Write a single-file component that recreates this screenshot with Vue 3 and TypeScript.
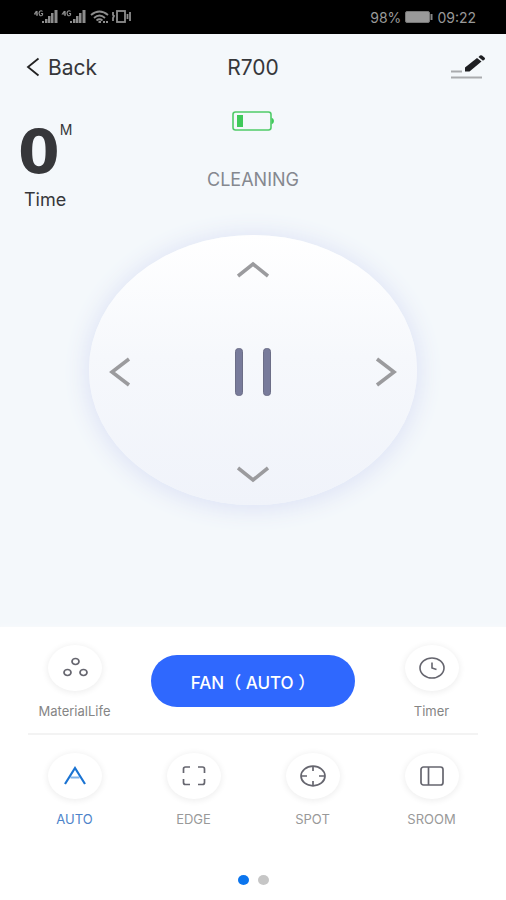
<script setup lang="ts">
import { ref } from 'vue'

type ModeId = 'auto' | 'edge' | 'spot' | 'sroom'
type Direction = 'up' | 'left' | 'right' | 'down'

interface Mode {
  id: ModeId
  label: string
}

const modes: Mode[] = [
  { id: 'auto', label: 'AUTO' },
  { id: 'edge', label: 'EDGE' },
  { id: 'spot', label: 'SPOT' },
  { id: 'sroom', label: 'SROOM' },
]

const arrows: { id: Direction; points: string; box: string }[] = [
  { id: 'up', points: '1,15 16,3 31,15', box: '0 0 32 18' },
  { id: 'left', points: '20,2 3,15 20,28', box: '0 0 22 30' },
  { id: 'right', points: '2,2 19,15 2,28', box: '0 0 22 30' },
  { id: 'down', points: '1,3 16,15 31,3', box: '0 0 32 18' },
]

const activeMode = ref<ModeId>('auto')
const page = ref(0)
</script>

<template>
  <div class="screen">
    <div class="status">
      <svg class="status-icons" viewBox="0 0 98 14" aria-hidden="true">
        <g fill="#8d8d8d">
          <g v-for="x in [0, 28]" :key="x" :transform="`translate(${x} 0)`">
            <path d="M2.500 1L0.500 4H4M3 1V6" fill="none" stroke="#8d8d8d" stroke-width="1.200" />
            <path d="M8.500 1.500A2 2.500 0 1 0 8.500 5V3.500H7" fill="none" stroke="#8d8d8d" stroke-width="1.200" />
            <rect x="8" y="11" width="2" height="2" />
            <rect x="11" y="9" width="2.500" height="4" />
            <rect x="14" y="6" width="2.500" height="7" />
            <rect x="17" y="3" width="2.500" height="10" />
            <rect x="20.500" y="0" width="3" height="13" />
          </g>
        </g>
        <g fill="none" stroke="#8d8d8d" stroke-width="1.800">
          <path d="M57 5Q65.500-2 74 5M60 8Q65.500 3 71 8M62.500 10.500Q65.500 8 68.500 10.500" />
          <path d="M64.500 12H67M69 12h2M72 12h2" />
          <rect x="83" y="1" width="8" height="11" />
          <path d="M79 2v3l1 1l-1 2v3M93.500 4v5M96 2v9" />
        </g>
      </svg>
      <div class="status-right">
        <span>98%</span>
        <svg class="status-battery" viewBox="0 0 28 12" aria-hidden="true">
          <rect x="0.500" y="0.500" width="24" height="11" rx="1.500" fill="#999" stroke="#777" />
          <path d="M26.500 3v6" stroke="#888" stroke-width="2" />
        </svg>
        <span>09:22</span>
      </div>
    </div>

    <header class="header">
      <button class="back" type="button">
        <svg viewBox="0 0 14 20" aria-hidden="true">
          <path d="M12.500 1.500L2 10L12.500 18.500" fill="none" stroke="#222" stroke-width="1.800" />
        </svg>
        Back
      </button>
      <h1>R700</h1>
      <button class="edit" type="button" aria-label="Edit">
        <svg viewBox="0 0 36 26" aria-hidden="true">
          <path d="M1 17.500H12M1 23.500H32" stroke="#a9abae" stroke-width="2" />
          <path d="M15 17.500V13.500L27 4L31.500 7.500L19.500 17.500Z" fill="#1e1f22" />
          <path d="M28.500 3L30 1.500Q31 .800 32 1.500L34.700 3.700Q35.500 4.500 34.700 5.300L33 6.700Z" fill="#1e1f22" />
        </svg>
      </button>
    </header>

    <main class="stage">
      <section class="info">
        <div class="time">
          <p class="time-value"><strong>0</strong><span>M</span></p>
          <p class="time-label">Time</p>
        </div>
        <div class="state">
          <svg class="battery" viewBox="0 0 42 20" role="img" aria-label="Battery low">
            <rect x="1" y="1" width="38" height="18" rx="2.500" fill="none" stroke="#4fcb68" stroke-width="1.600" />
            <rect x="5" y="4" width="6" height="12" fill="#3fc95a" />
            <path d="M39.500 6.500Q42 7.500 42 10Q42 12.500 39.500 13.500Z" fill="#3fc95a" />
          </svg>
          <p class="state-label">CLEANING</p>
        </div>
      </section>

      <section class="dial" aria-label="Direction control">
        <button
          v-for="arrow in arrows"
          :key="arrow.id"
          :class="['arrow', arrow.id]"
          type="button"
          :aria-label="arrow.id"
        >
          <svg :viewBox="arrow.box" aria-hidden="true">
            <polyline :points="arrow.points" fill="none" stroke="#9b9b9e" stroke-width="3.600" />
          </svg>
        </button>
        <button class="pause" type="button" aria-label="Pause">
          <svg viewBox="0 0 38 50" aria-hidden="true">
            <g fill="#787b9b" stroke="#6c6e87">
              <rect x="1.500" y="1.500" width="7" height="47" rx="3" />
              <rect x="29.500" y="1.500" width="7" height="47" rx="3" />
            </g>
          </svg>
        </button>
      </section>
    </main>

    <footer class="panel">
      <div class="row">
        <button class="tool" type="button">
          <span class="disc">
            <svg viewBox="0 0 28 24" aria-hidden="true">
              <g fill="none" stroke="#66666f" stroke-width="1.700">
                <ellipse cx="14.500" cy="5.500" rx="3.500" ry="3" />
                <ellipse cx="6.500" cy="16.500" rx="3.500" ry="3" />
                <ellipse cx="22.500" cy="16.500" rx="3.500" ry="3" />
              </g>
            </svg>
          </span>
          <span class="caption">MaterialLife</span>
        </button>
        <button class="fan" type="button">FAN（ AUTO ）</button>
        <button class="tool" type="button">
          <span class="disc">
            <svg viewBox="0 0 28 24" aria-hidden="true">
              <g fill="none" stroke="#66666f" stroke-width="1.600">
                <ellipse cx="14" cy="12" rx="12" ry="10" />
                <path d="M14 6.500V12L18.500 13.500" />
              </g>
            </svg>
          </span>
          <span class="caption">Timer</span>
        </button>
      </div>

      <hr class="divider" />

      <div class="row modes">
        <button
          v-for="mode in modes"
          :key="mode.id"
          :class="['tool', { active: mode.id === activeMode }]"
          type="button"
          :aria-pressed="mode.id === activeMode"
          @click="activeMode = mode.id"
        >
          <span class="disc">
            <svg viewBox="0 0 28 24" aria-hidden="true">
              <g fill="none" stroke="#66666f" stroke-width="1.700">
                <g v-if="mode.id === 'auto'" stroke="#1a73d2">
                  <path d="M9.500 13.500H18.500" stroke="#7fb2e8" stroke-width="2" />
                  <path d="M4 20L14 4L24 20" stroke-width="2.200" />
                </g>
                <path
                  v-else-if="mode.id === 'edge'"
                  d="M3.500 9V5Q3.500 3 5.500 3H10M18 3H22.500Q24.500 3 24.500 5V9M24.500 15V18.500Q24.500 20.500 22.500 20.500H18M10 20.500H5.500Q3.500 20.500 3.500 18.500V15"
                />
                <g v-else-if="mode.id === 'spot'">
                  <ellipse cx="14" cy="12" rx="12" ry="9.800" />
                  <path d="M14 2V7M14 17V22M2 12H8M20 12H26" />
                </g>
                <g v-else>
                  <rect x="3" y="3" width="22" height="18" rx="2.500" />
                  <path d="M10.500 3V21" />
                </g>
              </g>
            </svg>
          </span>
          <span class="caption">{{ mode.label }}</span>
        </button>
      </div>

      <nav class="dots" aria-label="Pages">
        <button
          v-for="n in 2"
          :key="n"
          :class="{ current: page === n - 1 }"
          type="button"
          :aria-label="`Page ${n}`"
          @click="page = n - 1"
        ></button>
      </nav>
    </footer>
  </div>
</template>

<style>
body {
  margin: 0;
  background: #fff;
}
</style>

<style scoped>
.screen {
  display: flex;
  flex-direction: column;
  min-height: 100vh;
  font-family: Inter, 'Noto Sans CJK SC', sans-serif;
  color: #36373a;
  background: #f4f8fb;
}

button {
  margin: 0;
  padding: 0;
  border: 0;
  background: none;
  color: inherit;
  font: inherit;
  cursor: pointer;
}

svg {
  display: block;
}

p,
h1 {
  margin: 0;
}

.status {
  display: flex;
  align-items: center;
  justify-content: space-between;
  height: 34px;
  padding: 0 30px 0 34px;
  background: #000;
  color: #999;
  font-size: 14px;
}

.status-icons {
  width: 98px;
  height: 14px;
}

.status-right {
  display: flex;
  align-items: center;
  gap: 4px;
}

.status-battery {
  width: 28px;
  height: 12px;
}

.header {
  display: grid;
  grid-template-columns: 1fr auto 1fr;
  align-items: center;
  height: 66px;
  padding: 0 20px;
  font-size: 21px;
}

.back {
  display: flex;
  align-items: center;
  justify-self: start;
  gap: 8px;
  padding-left: 6px;
}

.back svg {
  width: 14px;
  height: 20px;
}

h1 {
  font-size: 21px;
  font-weight: 400;
}

.edit {
  justify-self: end;
}

.edit svg {
  width: 36px;
  height: 26px;
}

.stage {
  flex: 1;
  display: flex;
  flex-direction: column;
  align-items: center;
}

.info {
  display: grid;
  grid-template-columns: 1fr auto 1fr;
  align-self: stretch;
  height: 135px;
}

.time {
  padding: 20px 0 0 18px;
}

.time-value {
  display: flex;
  align-items: flex-start;
}

.time-value strong {
  font-family: 'DejaVu Sans', sans-serif;
  font-size: 60px;
  line-height: 64px;
}

.time-value span {
  font-size: 14px;
  line-height: 20px;
}

.time-label {
  padding: 6px 0 0 6px;
  font-size: 18px;
  line-height: 20px;
}

.state {
  display: flex;
  flex-direction: column;
  align-items: center;
  gap: 39px;
  padding-top: 11px;
}

.battery {
  width: 42px;
  height: 20px;
}

.state-label {
  color: #85888f;
  font-size: 18px;
  line-height: 20px;
}

.dial {
  display: grid;
  grid-template: 1fr 1fr 1fr / 1fr 1fr 1fr;
  grid-template-areas: '. up .' 'left pause right' '. down .';
  box-sizing: border-box;
  width: 65%;
  aspect-ratio: 328 / 269;
  padding: 26px 20px 22px;
  border-radius: 50%;
  background: linear-gradient(#fff, #f6f8fc 45%, #f0f3fa);
  box-shadow: 0 2px 22px 4px #dfe4f6;
}

.arrow,
.pause {
  display: flex;
  align-items: center;
  justify-content: center;
}

.up {
  grid-area: up;
  align-items: flex-start;
}

.left {
  grid-area: left;
  justify-content: flex-start;
}

.right {
  grid-area: right;
  justify-content: flex-end;
}

.down {
  grid-area: down;
  align-items: flex-end;
}

.pause {
  grid-area: pause;
}

.up svg,
.down svg {
  width: 32px;
  height: 18px;
}

.left svg,
.right svg {
  width: 22px;
  height: 30px;
}

.pause svg {
  width: 38px;
  height: 50px;
}

.panel {
  padding: 18px 15px 15px;
  background: #fff;
  box-shadow: 0 -1px 4px #f8fafc;
}

.row {
  display: grid;
  grid-template-columns: repeat(4, 1fr);
}

.tool {
  display: flex;
  flex-direction: column;
  align-items: center;
  gap: 12px;
}

.disc {
  display: flex;
  align-items: center;
  justify-content: center;
  width: 54px;
  height: 46px;
  border-radius: 50%;
  background: #fff;
  box-shadow: 0 1px 6px 1px #efefef;
}

.disc svg {
  width: 28px;
  height: 24px;
}

.caption {
  color: #858585;
  font-size: 13px;
  line-height: 16px;
}

.modes .caption {
  color: #999;
}

.modes .active .caption {
  color: #4d83c9;
}

.fan {
  grid-column: span 2;
  justify-self: center;
  width: 86%;
  height: 52px;
  margin-top: 10px;
  border-radius: 26px;
  background: #2f68fe;
  color: #fff;
  font-size: 17px;
  font-weight: 500;
}

.divider {
  height: 2px;
  margin: 14px 13px 18px;
  border: 0;
  background: #f3f3f3;
}

.dots {
  display: flex;
  justify-content: center;
  gap: 9px;
  padding-top: 48px;
}

.dots button {
  width: 11px;
  height: 10px;
  border-radius: 50%;
  background: #c6c6c6;
}

.dots .current {
  background: #0b75ee;
}
</style>
